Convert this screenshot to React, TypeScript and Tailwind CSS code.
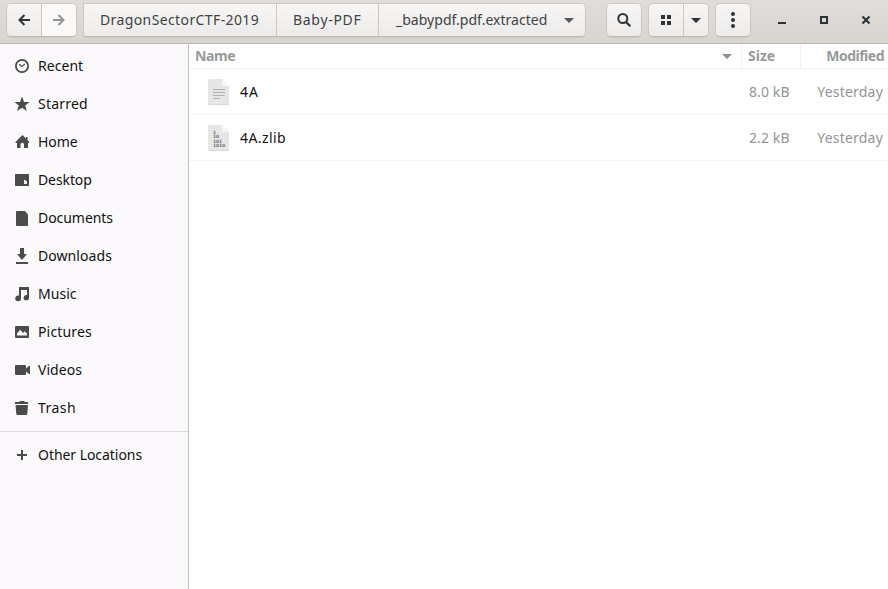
import type { ReactNode } from "react";

type IconProps = { children: ReactNode };

function Symbolic({ children }: IconProps) {
  return (
    <svg width="16" height="16" viewBox="0 0 16 16" fill="currentColor" className="block shrink-0">
      {children}
    </svg>
  );
}

const places: { label: string; tracking: string; icon: ReactNode }[] = [
  {
    label: "Recent",
    tracking: "tracking-[0.05px]",
    icon: (
      <>
        <circle cx="8" cy="8" r="6.1" fill="none" stroke="currentColor" strokeWidth="1.8" />
        <path d="M5 6.2 8 8.5 10.8 6" fill="none" stroke="currentColor" strokeWidth="1.1" />
      </>
    ),
  },
  {
    label: "Starred",
    tracking: "tracking-[0.2px]",
    icon: <path d="M8 .6 10 6h5.6L11.200 9.400l1.700 5.600L8 11.800 3.100 15l1.700-5.600L.4 6H6z" />,
  },
  {
    label: "Home",
    tracking: "tracking-[-0.1px]",
    icon: <path d="M8.500 1 1.500 8v1H3v5h3.500v-3.500a1.500 1.500 0 0 1 3.500 0V14h4V9h1V7.500l-1.500-1.500V3H12v1.500z" />,
  },
  {
    label: "Desktop",
    tracking: "tracking-[-0.1px]",
    icon: <path fillRule="evenodd" d="M1.500 2h13l.5.500v11l-.500.500h-13L1 13.500v-11zM10 8v4h3V9h-1.500V8z" />,
  },
  {
    label: "Documents",
    tracking: "tracking-[-0.05px]",
    icon: <path d="M2.800 1H11l3 3.500v10.700a.8.800 0 0 1-.8.800H2.800a.8.800 0 0 1-.8-.8V1.800A.8.800 0 0 1 2.800 1z" />,
  },
  {
    label: "Downloads",
    tracking: "tracking-[0.07px]",
    icon: <path d="M6 0h4v6h3L8 12 3 6h3zM2 14h12v2H2z" />,
  },
  {
    label: "Music",
    tracking: "tracking-[0.05px]",
    icon: <path d="M5 1h10v10.500A2.700 2.700 0 1 1 12.700 9H13V4H7v8.300A2.900 2.900 0 1 1 4.600 9.500H5z" />,
  },
  {
    label: "Pictures",
    tracking: "tracking-[0.15px]",
    icon: (
      <path
        fillRule="evenodd"
        d="M1.800 2h12.400l.8.800v10.400l-.8.800H1.800l-.8-.8V2.800zM3 11.500h10V9.500L10.800 7.200 9 9 6.200 5.700 3 9.500z"
      />
    ),
  },
  {
    label: "Videos",
    tracking: "tracking-[0.05px]",
    icon: <path d="M2 3h9a1 1 0 0 1 1 1v2.500L15 4h1v8h-1l-3-2.500V12a1 1 0 0 1-1 1H2a1 1 0 0 1-1-1V4a1 1 0 0 1 1-1z" />,
  },
  {
    label: "Trash",
    tracking: "tracking-[0.45px]",
    icon: <path d="M1 4V2h4l1-1h4l1 1h3v2zM1.500 5h12.500l-.7 8.500a1.500 1.500 0 0 1-1.500 1.500H3.800a1.500 1.500 0 0 1-1.500-1.500z" />,
  },
];

function Caret({ className }: { className: string }) {
  return (
    <svg width="10" height="5" viewBox="0 0 10 5" fill="currentColor" className={className}>
      <path d="M0 0h10L5 5z" />
    </svg>
  );
}

const button =
  "flex h-[34px] border border-[#cdc7c2] border-b-[#bfb8b1] bg-linear-to-b from-[#f7f6f5] to-[#edebe9] shadow-[0_1px_1px_rgba(0,0,0,0.05)] rounded-[5px]";

function HeaderBar() {
  return (
    <header className="flex h-11 shrink-0 items-start border-b border-[#bfb8b1] bg-linear-to-b from-[#e0ddda] to-[#d8d4d0] pt-[3px] pl-[6px] text-[#2e3436]">
      <div className={`${button} w-[71px]`}>
        <button className="flex w-[35px] items-center justify-center border-r border-[#cdc7c2]">
          <Symbolic>
            <path d="M14 8H4M8.500 3 3.500 8l5 5" fill="none" stroke="currentColor" strokeWidth="2" />
          </Symbolic>
        </button>
        <button className="flex flex-1 items-center justify-center rounded-r-[4px] bg-[#faf9f8] text-[#929595]">
          <Symbolic>
            <path d="M2 8h10M7.500 3l5 5-5 5" fill="none" stroke="currentColor" strokeWidth="2" />
          </Symbolic>
        </button>
      </div>

      <nav className={`${button} ml-[6px] w-[503px] rounded-l-none text-[#3d4244]`}>
        <button className="w-[193px] border-r border-[#cdc7c2] pl-4 text-left tracking-[0.39px]">DragonSectorCTF-2019</button>
        <button className="w-[102px] border-r border-[#cdc7c2] pl-4 text-left tracking-[0.7px]">Baby-PDF</button>
        <button className="flex flex-1 items-center pl-[17px]">
          <span className="w-[168px] text-left tracking-[0.02px]">_babypdf.pdf.extracted</span>
          <Caret className="text-[#555a5b]" />
        </button>
      </nav>

      <button className={`${button} ml-5 w-9 items-center justify-center`}>
        <Symbolic>
          <circle cx="6.800" cy="6.500" r="4.500" fill="none" stroke="currentColor" strokeWidth="2" />
          <path d="m10 10 4.300 4.300" stroke="currentColor" strokeWidth="2.300" />
        </Symbolic>
      </button>
      <div className={`${button} ml-[6px] w-[61px]`}>
        <button className="flex w-[35px] items-center justify-center border-r border-[#cdc7c2]">
          <Symbolic>
            <path d="M3 3h4v4H3zM9 3h4v4H9zM3 9h4v4H3zM9 9h4v4H9z" />
          </Symbolic>
        </button>
        <button className="flex flex-1 items-center justify-center">
          <Caret className="mt-px" />
        </button>
      </div>
      <button className={`${button} ml-[6px] w-9 items-center justify-center`}>
        <Symbolic>
          <circle cx="8" cy="2" r="2" />
          <circle cx="8" cy="8" r="2" />
          <circle cx="8" cy="14" r="2" />
        </Symbolic>
      </button>

      <div className="ml-[23px] flex h-[34px] items-center gap-[26px]">
        <Symbolic>
          <path d="M4 10h8v2H4z" />
        </Symbolic>
        <Symbolic>
          <path d="M5 5h6v6H5z" fill="none" stroke="currentColor" strokeWidth="2" />
        </Symbolic>
        <Symbolic>
          <path d="m4.500 4.500 7 7m0-7-7 7" fill="none" stroke="currentColor" strokeWidth="2.200" />
        </Symbolic>
      </div>
    </header>
  );
}

function Place({ label, tracking, icon }: { label: string; tracking: string; icon: ReactNode }) {
  return (
    <li className="flex h-[38px] items-center gap-2 pl-[14px] text-[#4b4b4c]">
      <Symbolic>{icon}</Symbolic>
      <span className={`text-[#111] ${tracking}`}>{label}</span>
    </li>
  );
}

function Sidebar() {
  return (
    <aside className="w-[189px] shrink-0 border-r border-[#c6c2c2] bg-[#fbf9fb] pt-[3px]">
      <ul>
        {places.map((place) => (
          <Place key={place.label} {...place} />
        ))}
      </ul>
      <div className="mt-1 h-px bg-[#dddbdd]" />
      <ul className="mt-1">
        <Place
          label="Other Locations"
          tracking="tracking-[-0.05px]"
          icon={<path d="M7 3h2v4h4v2H9v4H7V9H3V7h4z" />}
        />
      </ul>
    </aside>
  );
}

function FileIcon({ binary }: { binary: boolean }) {
  return (
    <svg width="22" height="28" viewBox="0 0 22 28" className="block shrink-0">
      <path d="M1 1h13l7 7v19H1a1 1 0 0 1-1-1V2a1 1 0 0 1 1-1z" fill="#e6e6e6" />
      <path d="M14 1l7 7h-5.500A1.500 1.500 0 0 1 14 6.500z" fill="#f6f6f6" />
      <path d="M.5 26.500H21" stroke="#d8d8d8" />
      {binary ? (
        <g fill="#6c6c6c" fontFamily="DejaVu Sans, sans-serif" fontWeight="700" fontSize="4.400">
          <text x="5" y="9.500">1</text>
          <text x="5" y="14" textLength="6" lengthAdjust="spacingAndGlyphs">10</text>
          <text x="5" y="18.700" textLength="9" lengthAdjust="spacingAndGlyphs">101</text>
          <text x="5" y="23.200" textLength="12" lengthAdjust="spacingAndGlyphs">1010</text>
        </g>
      ) : (
        <path d="M5 11.500h12M5 14.500h12M5 17.500h12M5 20.500h7" stroke="#b0b0b0" />
      )}
    </svg>
  );
}

const files = [
  { name: "4A", tracking: "tracking-[1px]", size: "8.0 kB", modified: "Yesterday", binary: false },
  { name: "4A.zlib", tracking: "tracking-[0.4px]", size: "2.2 kB", modified: "Yesterday", binary: true },
];

function FileList() {
  return (
    <main className="flex-1 bg-white">
      <div className="flex h-[25px] items-stretch border-b border-[#f2f2f2] leading-6 font-bold text-[#979a9b]">
        <div className="flex w-[553px] items-center justify-between border-r border-[#f2f2f2] pr-[9px] pl-[6px]">
          <span className="tracking-[-0.4px]">Name</span>
          <Caret className="text-[#8b8e8f]" />
        </div>
        <div className="w-[59px] border-r border-[#f2f2f2] pl-[6px]">Size</div>
        <div className="flex-1 pr-[4px] text-right tracking-[-0.5px]">Modified</div>
      </div>
      {files.map((file) => (
        <div key={file.name} className="flex h-[46px] items-center border-b border-[#f4f4f4] text-[#929595]">
          <div className="flex w-[560px] items-center gap-[10px] pl-[19px]">
            <FileIcon binary={file.binary} />
            <span className={`text-[#111] ${file.tracking}`}>{file.name}</span>
          </div>
          <span className="w-[60px] tracking-[0.1px]">{file.size}</span>
          <span className="flex-1 pr-[5px] text-right tracking-[0.2px]">{file.modified}</span>
        </div>
      ))}
    </main>
  );
}

export default function App() {
  return (
    <div className="flex h-[589px] w-[888px] flex-col overflow-hidden bg-white font-['Noto_Sans',sans-serif] text-[14px] leading-5">
      <HeaderBar />
      <div className="flex min-h-0 flex-1">
        <Sidebar />
        <FileList />
      </div>
    </div>
  );
}
